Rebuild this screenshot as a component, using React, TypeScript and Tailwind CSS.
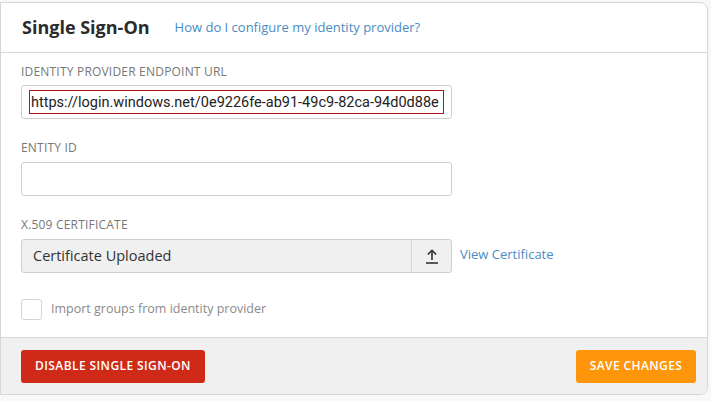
import { useState } from 'react';

const openSans = { fontFamily: '"Open Sans", "Noto Sans", sans-serif' };

const Label = ({ children }: { children: React.ReactNode }) => (
  <div className="text-[12px] leading-none tracking-[0.2px] uppercase text-[#777]" style={openSans}>
    {children}
  </div>
);

const UploadIcon = () => (
  <svg width="14" height="16" viewBox="0 0 14 16" fill="none" stroke="#333" strokeWidth="1.6">
    <path d="M7 12V2.5" />
    <path d="M2.8 6.5L7 2.3l4.2 4.2" />
    <path d="M1 15h12" />
  </svg>
);

export default function App() {
  const [url, setUrl] = useState('https://login.windows.net/0e9226fe-ab91-49c9-82ca-94d0d88e');
  const [entityId, setEntityId] = useState('');
  const [importGroups, setImportGroups] = useState(false);

  return (
    <div className="w-[711px] h-[401px] bg-[#f8f8f8] pt-[2px]" style={openSans}>
      <div className="w-[708px] h-[393px] bg-white border border-[#d6d6d6] rounded-r-[8px] flex flex-col overflow-hidden">
        {/* header */}
        <div className="h-[50px] shrink-0 border-b border-[#d9d9d9] flex items-center pl-[21px] gap-[25px]">
          <h1 className="text-[18px] font-bold text-[#2b2b2b]">Single Sign-On</h1>
          <a href="#" className="text-[13px] text-[#4a8bc2] mt-[1px]">How do I configure my identity provider?</a>
        </div>

        {/* body */}
        <div className="flex-1 pl-[20px] pt-[13px]">
          <Label>Identity Provider Endpoint URL</Label>
          <div className="mt-[7px] w-[431px] h-[34px] border border-[#cfcfcf] rounded-[3px] flex items-center px-[7px]">
            <input
              value={url}
              onChange={(e) => setUrl(e.target.value)}
              className="w-full h-[24px] border border-[#b3121a] px-[1px] text-[14.5px] text-[#222] outline-none"
              style={{ fontFamily: 'Roboto, "Liberation Sans", sans-serif' }}
            />
          </div>

          <div className="mt-[23px]">
            <Label>Entity ID</Label>
          </div>
          <input
            value={entityId}
            onChange={(e) => setEntityId(e.target.value)}
            className="block mt-[8px] w-[431px] h-[34px] border border-[#cfcfcf] rounded-[3px] px-[11px] text-[14px] outline-none"
          />

          <div className="mt-[23px]">
            <Label>X.509 Certificate</Label>
          </div>
          <div className="mt-[8px] flex items-center gap-[8px]">
            <div className="w-[431px] h-[34px] border border-[#cfcfcf] rounded-[3px] bg-[#f0f0f0] flex">
              <div className="flex-1 flex items-center pl-[11px] text-[14.5px] text-[#333]">Certificate Uploaded</div>
              <button className="w-[40px] border-l border-[#d6d6d6] flex items-center justify-center">
                <UploadIcon />
              </button>
            </div>
            <a href="#" className="text-[13px] text-[#4a8bc2] -mt-[3px]">View Certificate</a>
          </div>

          <label className="mt-[26px] flex items-center gap-[9px] cursor-pointer">
            <input
              type="checkbox"
              checked={importGroups}
              onChange={(e) => setImportGroups(e.target.checked)}
              className="appearance-none w-[21px] h-[21px] border border-[#d4d4d4] rounded-[3px] bg-white"
            />
            <span className="text-[12.5px] text-[#8a8a8a]">Import groups from identity provider</span>
          </label>
        </div>

        {/* footer */}
        <div className="h-[57px] shrink-0 bg-[#f0f0f0] border-t border-[#d6d6d6] flex items-center justify-between pl-[20px] pr-[11px]">
          <button className="h-[33px] w-[184px] rounded-[3px] bg-[#cf2a17] text-white text-[12px] font-semibold uppercase tracking-[0.4px]">
            Disable Single Sign-On
          </button>
          <button className="h-[33px] w-[120px] rounded-[3px] bg-[#ff950a] text-white text-[12px] font-semibold uppercase tracking-[0.4px]">
            Save Changes
          </button>
        </div>
      </div>
    </div>
  );
}
